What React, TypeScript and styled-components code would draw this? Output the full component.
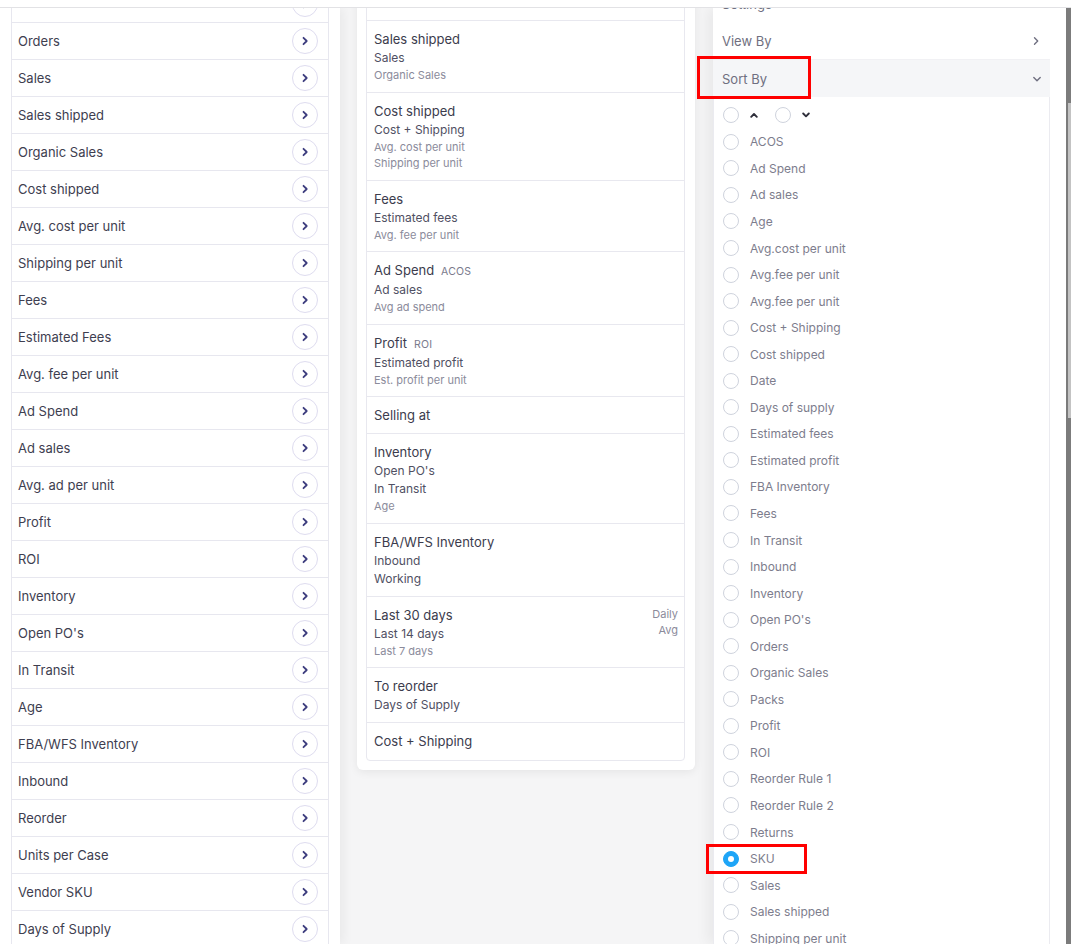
import styled, { createGlobalStyle } from "styled-components";

const GlobalStyle = createGlobalStyle`
  html, body {
    margin: 0;
    padding: 0;
    background: #ffffff;
  }
  body {
    font-family: Inter, "Open Sans", sans-serif;
  }
  * {
    box-sizing: border-box;
  }
`;

const leftItems = [
  "",
  "Orders",
  "Sales",
  "Sales shipped",
  "Organic Sales",
  "Cost shipped",
  "Avg. cost per unit",
  "Shipping per unit",
  "Fees",
  "Estimated Fees",
  "Avg. fee per unit",
  "Ad Spend",
  "Ad sales",
  "Avg. ad per unit",
  "Profit",
  "ROI",
  "Inventory",
  "Open PO's",
  "In Transit",
  "Age",
  "FBA/WFS Inventory",
  "Inbound",
  "Reorder",
  "Units per Case",
  "Vendor SKU",
  "Days of Supply",
];

interface MidLine {
  text: string;
  level: 2 | 3;
}

interface MidItem {
  title: string;
  tag?: string;
  lines: MidLine[];
  side?: string[];
}

const midItems: MidItem[] = [
  {
    title: "Sales shipped",
    lines: [
      { text: "Sales", level: 2 },
      { text: "Organic Sales", level: 3 },
    ],
  },
  {
    title: "Cost shipped",
    lines: [
      { text: "Cost + Shipping", level: 2 },
      { text: "Avg. cost per unit", level: 3 },
      { text: "Shipping per unit", level: 3 },
    ],
  },
  {
    title: "Fees",
    lines: [
      { text: "Estimated fees", level: 2 },
      { text: "Avg. fee per unit", level: 3 },
    ],
  },
  {
    title: "Ad Spend",
    tag: "ACOS",
    lines: [
      { text: "Ad sales", level: 2 },
      { text: "Avg ad spend", level: 3 },
    ],
  },
  {
    title: "Profit",
    tag: "ROI",
    lines: [
      { text: "Estimated profit", level: 2 },
      { text: "Est. profit per unit", level: 3 },
    ],
  },
  { title: "Selling at", lines: [] },
  {
    title: "Inventory",
    lines: [
      { text: "Open PO's", level: 2 },
      { text: "In Transit", level: 2 },
      { text: "Age", level: 3 },
    ],
  },
  {
    title: "FBA/WFS Inventory",
    lines: [
      { text: "Inbound", level: 2 },
      { text: "Working", level: 2 },
    ],
  },
  {
    title: "Last 30 days",
    lines: [
      { text: "Last 14 days", level: 2 },
      { text: "Last 7 days", level: 3 },
    ],
    side: ["Daily", "Avg"],
  },
  {
    title: "To reorder",
    lines: [{ text: "Days of Supply", level: 2 }],
  },
  { title: "Cost + Shipping", lines: [] },
];

const sortItems = [
  "ACOS",
  "Ad Spend",
  "Ad sales",
  "Age",
  "Avg.cost per unit",
  "Avg.fee per unit",
  "Avg.fee per unit",
  "Cost + Shipping",
  "Cost shipped",
  "Date",
  "Days of supply",
  "Estimated fees",
  "Estimated profit",
  "FBA Inventory",
  "Fees",
  "In Transit",
  "Inbound",
  "Inventory",
  "Open PO's",
  "Orders",
  "Organic Sales",
  "Packs",
  "Profit",
  "ROI",
  "Reorder Rule 1",
  "Reorder Rule 2",
  "Returns",
  "SKU",
  "Sales",
  "Sales shipped",
  "Shipping per unit",
  "Units",
];

const ChevronRight = ({ color, width }: { color: string; width: number }) => (
  <svg width="10" height="10" viewBox="0 0 10 10">
    <polyline
      points="3.5,1.8 6.7,5 3.5,8.2"
      fill="none"
      stroke={color}
      strokeWidth={width}
      strokeLinecap="round"
      strokeLinejoin="round"
    />
  </svg>
);

const ChevronDown = ({ color, width }: { color: string; width: number }) => (
  <svg width="10" height="10" viewBox="0 0 10 10">
    <polyline
      points="1.8,3.5 5,6.7 8.2,3.5"
      fill="none"
      stroke={color}
      strokeWidth={width}
      strokeLinecap="round"
      strokeLinejoin="round"
    />
  </svg>
);

const Caret = ({ up }: { up?: boolean }) => (
  <svg width="8" height="6" viewBox="0 0 8 6">
    <polyline
      points={up ? "1.2,4.8 4,2 6.8,4.8" : "1.2,1.5 4,4.3 6.8,1.5"}
      fill="none"
      stroke="#2e2e3a"
      strokeWidth="1.9"
      strokeLinecap="round"
      strokeLinejoin="round"
    />
  </svg>
);

const App = () => {
  return (
    <Page>
      <GlobalStyle />
      <TopBar />
      <Body>
        <LeftPanel>
          <LeftList>
            {leftItems.map((item, i) => (
              <LeftRow key={item + i}>
                <span>{item}</span>
                <ArrowCircle>
                  <ChevronRight color="#3d3d7e" width={1.8} />
                </ArrowCircle>
              </LeftRow>
            ))}
          </LeftList>
        </LeftPanel>

        <MiddleColumn>
          <Card>
            <CardList>
              <PartialRow />
              {midItems.map((item) => (
                <MidRow key={item.title}>
                  <MidText>
                    <MidTitle>
                      {item.title}
                      {item.tag && <Tag>{item.tag}</Tag>}
                    </MidTitle>
                    {item.lines.map((line) => (
                      <MidLineText key={line.text} level={line.level}>
                        {line.text}
                      </MidLineText>
                    ))}
                  </MidText>
                  {item.side && (
                    <SideText>
                      {item.side.map((s) => (
                        <div key={s}>{s}</div>
                      ))}
                    </SideText>
                  )}
                </MidRow>
              ))}
            </CardList>
          </Card>
        </MiddleColumn>

        <RightPanel>
          <RightContent>
            <PlainRow>
              <span>Settings</span>
            </PlainRow>
            <PlainRow>
              <span>View By</span>
              <ChevronRight color="#6f6f80" width={1.4} />
            </PlainRow>
            <SortHeader>
              <span>Sort By</span>
              <ChevronDown color="#6f6f80" width={1.4} />
              <Highlight $left={-16} $top={-4} $width={114} $height={43} />
            </SortHeader>
            <SortBox>
              <SortRow>
                <Radio />
                <Caret up />
                <Radio $offset={6} />
                <Caret />
              </SortRow>
              {sortItems.map((item, i) => (
                <SortRow key={item + i}>
                  <Radio $checked={item === "SKU"} />
                  <span>{item}</span>
                  {item === "SKU" && (
                    <Highlight $left={-17} $top={-1} $width={101} $height={30} />
                  )}
                </SortRow>
              ))}
            </SortBox>
          </RightContent>
        </RightPanel>

        <ScrollTrack>
          <ScrollThumb />
        </ScrollTrack>
      </Body>
    </Page>
  );
};

export default App;

const Page = styled.div`
  width: 100%;
  height: 100vh;
  display: flex;
  flex-direction: column;
  overflow: hidden;
  background: #ffffff;
`;

const TopBar = styled.div`
  height: 8px;
  flex: none;
  background: #ffffff;
  border-bottom: 1px solid #e2e2e5;
  position: relative;
  z-index: 3;
`;

const Body = styled.div`
  flex: 1;
  min-height: 0;
  display: flex;
  overflow: hidden;
  background: #f5f5f6;
`;

const LeftPanel = styled.div`
  width: 340px;
  flex: none;
  background: #ffffff;
  padding: 0 11px;
  box-shadow: 4px 0 10px rgba(0, 0, 0, 0.05);
  position: relative;
  z-index: 1;
`;

const LeftList = styled.div`
  margin-top: -23px;
  border: 1px solid #e7e7ef;
  border-bottom: none;
`;

const LeftRow = styled.div`
  height: 37px;
  display: flex;
  align-items: center;
  justify-content: space-between;
  padding: 0 10px 0 6px;
  border-bottom: 1px solid #e7e7ef;
  font-size: 13px;
  color: #3e3e50;
`;

const ArrowCircle = styled.div`
  width: 26px;
  height: 26px;
  border-radius: 50%;
  border: 1px solid #dedcef;
  display: flex;
  align-items: center;
  justify-content: center;
  background: #ffffff;
`;

const MiddleColumn = styled.div`
  width: 373px;
  flex: none;
  padding: 0 18px 0 17px;
`;

const Card = styled.div`
  margin-top: -52px;
  background: #ffffff;
  padding: 9px 10px 9px 9px;
  border-radius: 0 0 6px 6px;
  box-shadow: 0 2px 10px rgba(0, 0, 0, 0.07);
`;

const CardList = styled.div`
  border: 1px solid #e8e8ef;
  border-radius: 0 0 4px 4px;
`;

const PartialRow = styled.div`
  height: 55px;
  border-bottom: 1px solid #e8e8ef;
`;

const MidRow = styled.div`
  display: flex;
  justify-content: space-between;
  padding: 9px 6px 8px 7px;
  border-bottom: 1px solid #e8e8ef;
  &:last-child {
    border-bottom: none;
    padding-bottom: 9px;
  }
`;

const MidText = styled.div`
  display: flex;
  flex-direction: column;
`;

const MidTitle = styled.div`
  font-size: 13px;
  line-height: 19px;
  color: #3c3c4d;
  display: flex;
  align-items: baseline;
`;

const Tag = styled.span`
  font-size: 10.5px;
  color: #7a7a8c;
  margin-left: 7px;
  letter-spacing: 0.2px;
`;

const MidLineText = styled.div<{ level: 2 | 3 }>`
  font-size: ${(props) => (props.level === 2 ? "12px" : "11px")};
  line-height: ${(props) => (props.level === 2 ? "18px" : "16.5px")};
  color: ${(props) => (props.level === 2 ? "#505063" : "#8b8b9b")};
`;

const SideText = styled.div`
  font-size: 11px;
  line-height: 16px;
  color: #8b8b9b;
  text-align: right;
`;

const RightPanel = styled.div`
  width: 353px;
  flex: none;
  background: #ffffff;
  padding-right: 16px;
  box-shadow: -6px 0 12px rgba(0, 0, 0, 0.05);
  position: relative;
  z-index: 1;
`;

const RightContent = styled.div`
  margin-top: -23px;
`;

const PlainRow = styled.div`
  height: 37px;
  display: flex;
  align-items: center;
  justify-content: space-between;
  padding: 0 9px;
  font-size: 13px;
  color: #6f6f80;
`;

const SortHeader = styled.div`
  position: relative;
  height: 38px;
  display: flex;
  align-items: center;
  justify-content: space-between;
  padding: 0 8px 0 9px;
  background: #f5f6f8;
  border-top: 1px solid #f1f1f4;
  font-size: 13px;
  color: #6f6f80;
`;

const Highlight = styled.div<{
  $left: number;
  $top: number;
  $width: number;
  $height: number;
}>`
  position: absolute;
  left: ${(props) => props.$left}px;
  top: ${(props) => props.$top}px;
  width: ${(props) => props.$width}px;
  height: ${(props) => props.$height}px;
  border: 3px solid #ff0000;
  pointer-events: none;
`;

const SortBox = styled.div`
  border: 1px solid #ebebf0;
  border-top: none;
  padding: 5px 0 0 9px;
`;

const SortRow = styled.div`
  position: relative;
  height: 26.55px;
  display: flex;
  align-items: center;
  gap: 11px;
  font-size: 12px;
  color: #7d7d8d;
`;

const Radio = styled.div<{ $checked?: boolean; $offset?: number }>`
  width: 16px;
  height: 16px;
  flex: none;
  margin-left: ${(props) => props.$offset || 0}px;
  border-radius: 50%;
  border: 1px solid ${(props) => (props.$checked ? "#1ea5f7" : "#cfd3dd")};
  background: ${(props) => (props.$checked ? "#1ea5f7" : "#ffffff")};
  display: flex;
  align-items: center;
  justify-content: center;
  &::after {
    content: "";
    display: ${(props) => (props.$checked ? "block" : "none")};
    width: 6px;
    height: 6px;
    border-radius: 50%;
    background: #ffffff;
  }
`;

const ScrollTrack = styled.div`
  width: 5px;
  flex: none;
  background: #7c7c7c;
  padding-top: 95px;
  display: flex;
  justify-content: flex-end;
`;

const ScrollThumb = styled.div`
  width: 3px;
  height: 315px;
  background: #c3c3c3;
`;
